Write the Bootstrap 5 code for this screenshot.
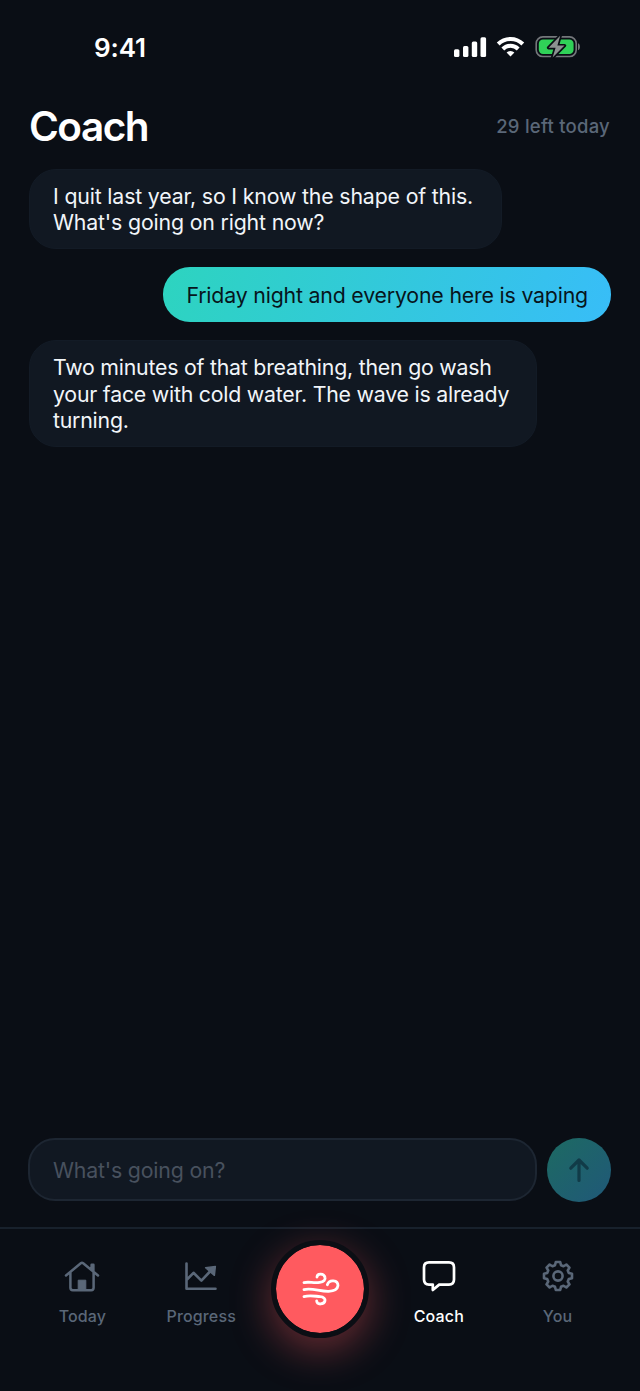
<!DOCTYPE html>
<html lang="en" data-bs-theme="dark">
<head>
<meta charset="utf-8">
<meta name="viewport" content="width=device-width, initial-scale=1">
<title>Coach</title>
<link href="https://cdn.jsdelivr.net/npm/bootstrap@5.3.0/dist/css/bootstrap.min.css" rel="stylesheet">
<style>
  :root { --ink: #0a0e15; --panel: #111822; --line: #1d2632; --muted: #5a6778; --soft: #f1f5f9; }
  body { background: var(--ink); color: var(--soft); font-family: Inter, "Liberation Sans", sans-serif; }
  .screen { height: 1391px; overflow: hidden; }
  .status { height: 94px; padding: 0 60px 0 94px; }
  .clock { font-size: 26px; font-weight: 600; letter-spacing: -.1px; line-height: 30px; padding-top: 2px; color: #fff; }
  .top-bar { height: 75px; padding: 0 30px 10px 29px; }
  .top-bar h1 { font-size: 40.5px; font-weight: 600; letter-spacing: -1.5px; line-height: 48px; }
  .quota { font-size: 18.5px; font-weight: 500; letter-spacing: .24px; color: var(--muted); line-height: 24px; margin-top: -2px; }
  .chat { padding: 0 29px; gap: 18px; }
  .bubble { border-radius: 27px; padding: 13px 28px 13px 23px; font-size: 21.3px; line-height: 26.2px; letter-spacing: -.16px; border: 1px solid #131b26; background: var(--panel); white-space: nowrap; }
  .bubble-me { border: 0; padding: 14.4px 23px; letter-spacing: -.18px; background: linear-gradient(110deg, #2dd4bf, #38bdf8); color: #07151c; }
  .bubble-long { padding-right: 27px; letter-spacing: -.22px; }
  .composer { padding: 0 29px 25px 28px; gap: 10px; }
  .composer .form-control { height: 63px; margin-top: -1px; border: 2px solid var(--line); border-radius: 27px; background: var(--panel); padding: 0 23px; font-size: 21.3px; letter-spacing: -.18px; }
  .composer .form-control::placeholder { color: #48515e; opacity: 1; }
  .send { width: 64px; height: 64px; background: linear-gradient(135deg, #1d6a62, #205878); border: 0; }
  .tabs { height: 164px; border-top: 2px solid #18212c; padding: 0 23px; }
  .tab { color: var(--muted); flex: 1 1 0; padding-top: 29px; font-size: 16px; font-weight: 500; letter-spacing: .15px; line-height: 20px; text-decoration: none; }
  .tab svg { margin-top: -1px; margin-bottom: 11px; }
  .tab.active { color: #fff; }
  .fab { width: 98px; height: 98px; margin-top: 11px; border: 5px solid #0b0e14; background: #ff5a5f; box-shadow: 0 12px 40px rgba(255,90,95,.4); background-clip: padding-box; }
</style>
</head>
<body>
<div class="screen d-flex flex-column">
  <div class="status d-flex align-items-center justify-content-between flex-shrink-0">
    <span class="clock">9:41</span>
    <div class="d-flex align-items-center">
      <svg width="33" height="21" viewBox="0 0 33 21" fill="#fff"><rect x="0" y="12.3" width="5.4" height="7.7" rx="1.5"/><rect x="9" y="9" width="5.4" height="11" rx="1.5"/><rect x="17.8" y="4.6" width="5.4" height="15.4" rx="1.5"/><rect x="26.5" y="0.2" width="5.6" height="19.8" rx="1.5"/></svg>
      <svg class="ms-2" width="31" height="24" viewBox="0 0 31 24" fill="none" stroke="#fff" stroke-width="4"><path d="M3.2 9a17.5 17.5 0 0 1 24.6 0"/><path d="M7.8 14a11 11 0 0 1 15.4 0"/><path d="M15.5 21.5l-3.9-4a5.5 5.5 0 0 1 7.8 0z" fill="#fff" stroke="none"/></svg>
      <svg class="ms-2" width="46" height="24" viewBox="0 0 46 24"><rect x="2.2" y="1.9" width="40" height="19.6" rx="6.6" fill="none" stroke="#74777b" stroke-width="1.6"/><path d="M44 8.2c2.5.7 2.5 6.3 0 7z" fill="#74777b"/><rect x="4.8" y="4.5" width="34.8" height="14.4" rx="4.2" fill="#30d158"/><path d="M26.2.8L14.6 12.7h7l-3 9.9 11.9-12h-7.1z" fill="#8c9191" stroke="#0a0d14" stroke-width="3.4" paint-order="stroke" stroke-linejoin="round"/></svg>
    </div>
  </div>

  <header class="top-bar d-flex align-items-center justify-content-between flex-shrink-0">
    <h1 class="m-0">Coach</h1>
    <span class="quota">29 left today</span>
  </header>

  <main class="chat d-flex flex-column flex-grow-1">
    <div class="bubble align-self-start">I quit last year, so I know the shape of this.<br>What's going on right now?</div>
    <div class="bubble bubble-me align-self-end">Friday night and everyone here is vaping</div>
    <div class="bubble bubble-long align-self-start">Two minutes of that breathing, then go wash<br>your face with cold water. The wave is already<br>turning.</div>
  </main>

  <form class="composer d-flex align-items-center flex-shrink-0">
    <input class="form-control" type="text" placeholder="What's going on?" aria-label="Message">
    <button class="send btn rounded-circle p-0 flex-shrink-0 d-flex align-items-center justify-content-center" type="button" aria-label="Send">
      <svg width="24" height="26" viewBox="0 0 24 26" fill="none" stroke="#113b48" stroke-width="3.2" stroke-linecap="round" stroke-linejoin="round"><path d="M12 23.5V3M3.8 11.2L12 3l8.2 8.2"/></svg>
    </button>
  </form>

  <nav class="tabs d-flex flex-shrink-0">
    <a class="tab d-flex flex-column align-items-center" href="#">
      <svg width="36" height="38" viewBox="0 0 36 38" fill="none" stroke="currentColor" stroke-width="2.5" stroke-linecap="round" stroke-linejoin="round"><path d="M2 18.5L16.8 6.2q1.2-1 2.4 0L34 18.5M6.4 15.2v15.6q0 2.4 2.4 2.4h18.4q2.4 0 2.4-2.4V15.2M27.6 13V7.8h1.8v6.8"/><path d="M14.2 33V23.2h7.6V33z" fill="currentColor" stroke-width="1"/></svg>
      Today
    </a>
    <a class="tab d-flex flex-column align-items-center" href="#">
      <svg width="34" height="38" viewBox="0 0 34 38" fill="none" stroke="currentColor" stroke-width="2.6" stroke-linecap="round" stroke-linejoin="round"><path d="M2.5 6.5v25.3h29M3 22.5l6.5-6.7 7.9 7.8L26.5 14"/><path d="M31.4 9.4l-1 9-8.8-7.6z" fill="currentColor" stroke-width="1.4"/></svg>
      Progress
    </a>
    <div class="tab d-flex flex-column align-items-center pt-0">
      <button class="fab btn rounded-circle p-0 d-flex align-items-center justify-content-center flex-shrink-0" type="button" aria-label="Breathe">
        <svg class="m-0" width="40" height="38" viewBox="240 150 120 114" fill="none" stroke="#fff" stroke-width="8.5" stroke-linecap="round"><path d="M252 188C264 184 282 190 299 187C312 185 317 179 315 172C312 160 292 159 291 171"/><path d="M252 209C276 203 300 215 326 214C347 213 353 205 354 197C354 180 328 177 322 194"/><path d="M252 230C270 224 286 229 300 230C312 231 316 237 315 242C312 255 291 255 290 243"/></svg>
      </button>
    </div>
    <a class="tab active d-flex flex-column align-items-center" href="#">
      <svg width="36" height="38" viewBox="0 0 36 38" fill="none" stroke="currentColor" stroke-width="2.7" stroke-linecap="round" stroke-linejoin="round"><path d="M8 5.4h20q5 0 5 5v12.2q0 5-5 5H18.2L11.8 33v-5.4H8q-5 0-5-5V10.4q0-5 5-5z"/></svg>
      Coach
    </a>
    <a class="tab d-flex flex-column align-items-center" href="#">
      <svg width="34" height="38" viewBox="-17 -19 34 38" fill="none" stroke="currentColor" stroke-width="2.6" stroke-linejoin="round"><path d="M-3-10.8L-2.2-14H2.2L3-10.8 5.52-9.76 8.34-11.46 11.46-8.34 9.76-5.52 10.8-3 14-2.2V2.2L10.8 3 9.76 5.52 11.46 8.34 8.34 11.46 5.52 9.76 3 10.8 2.2 14H-2.2L-3 10.8-5.52 9.76-8.34 11.46-11.46 8.34-9.76 5.52-10.8 3-14 2.2V-2.2L-10.8-3-9.76-5.52-11.46-8.34-8.34-11.46-5.52-9.76z"/><circle r="4.6"/></svg>
      You
    </a>
  </nav>
</div>
<script src="https://cdn.jsdelivr.net/npm/bootstrap@5.3.0/dist/js/bootstrap.bundle.min.js"></script>
</body>
</html>
